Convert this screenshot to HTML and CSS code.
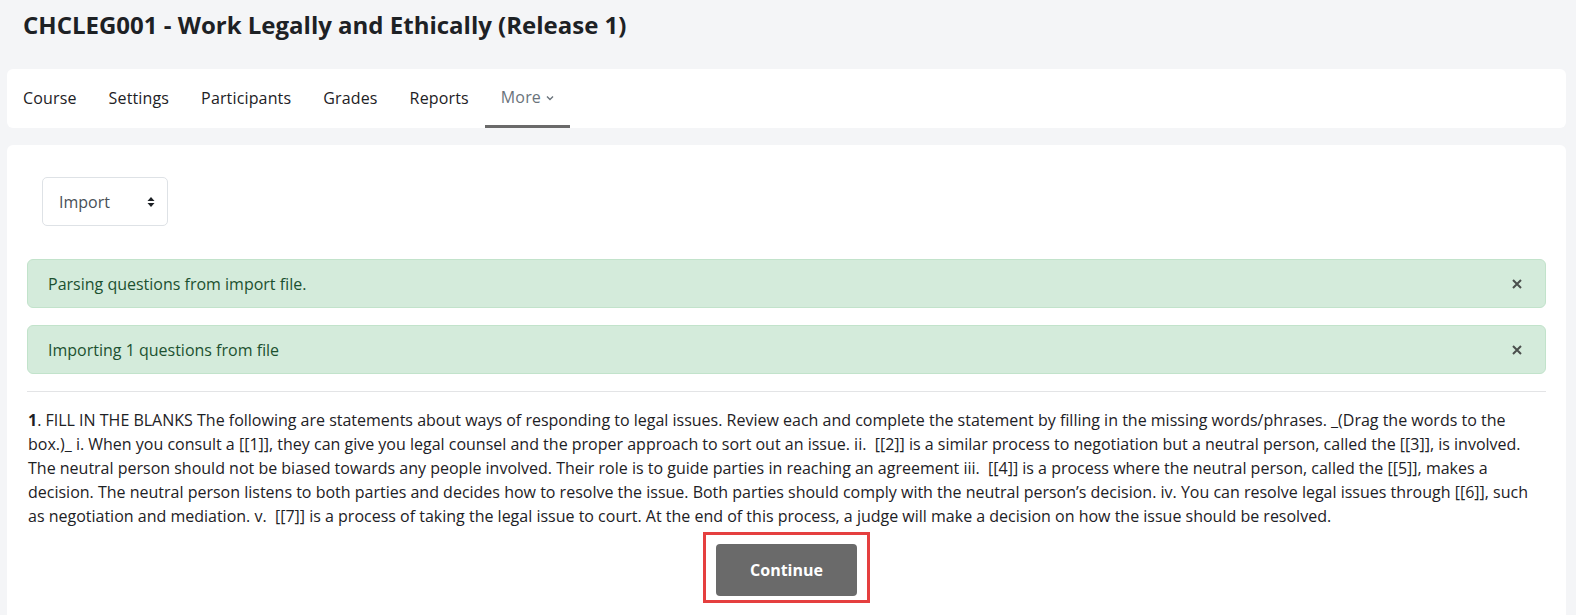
FILE: index.html
```html
<!DOCTYPE html>
<html lang="en">
<head>
    <meta charset="UTF-8">
    <meta name="viewport" content="width=device-width, initial-scale=1.0">
    <title>Import questions</title>
    <link rel="stylesheet" href="styles.css">
</head>
<body>

    <div class="page">
        <h1 class="page-title">CHCLEG001 - Work Legally and Ethically (Release 1)</h1>

        <nav class="secondary-nav">
            <a class="nav-link" href="#">Course</a>
            <a class="nav-link" href="#">Settings</a>
            <a class="nav-link" href="#">Participants</a>
            <a class="nav-link" href="#">Grades</a>
            <a class="nav-link" href="#">Reports</a>
            <a class="nav-link active" href="#">More
                <svg class="caret" width="8" height="6" viewBox="0 0 8 6"><path d="M1 1.5 L4 4.5 L7 1.5" fill="none" stroke="currentColor" stroke-width="1.4"/></svg>
            </a>
        </nav>

        <div class="main-card">
            <div class="select-box">
                <span>Import</span>
                <svg width="8" height="12" viewBox="0 0 8 12"><path d="M4 1 L7.5 5 H0.5 Z M4 11 L7.5 7 H0.5 Z" fill="#1d2125"/></svg>
            </div>

            <div class="alert">
                <span>Parsing questions from import file.</span>
                <button class="close-btn" aria-label="Dismiss">
                    <svg width="10" height="10" viewBox="0 0 10 10"><path d="M1 1 L9 9 M9 1 L1 9" stroke="currentColor" stroke-width="2"/></svg>
                </button>
            </div>

            <div class="alert">
                <span>Importing 1 questions from file</span>
                <button class="close-btn" aria-label="Dismiss">
                    <svg width="10" height="10" viewBox="0 0 10 10"><path d="M1 1 L9 9 M9 1 L1 9" stroke="currentColor" stroke-width="2"/></svg>
                </button>
            </div>

            <hr class="divider">

            <p class="question-text"><strong>1</strong>. FILL IN THE BLANKS The following are statements about ways of responding to legal issues. Review each and complete the statement by filling in the missing words/phrases. _(Drag the words to the box.)_ i. When you consult a [[1]], they can give you legal counsel and the proper approach to sort out an issue. ii.&nbsp; [[2]] is a similar process to negotiation but a neutral person, called the [[3]], is involved. The neutral person should not be biased towards any people involved. Their role is to guide parties in reaching an agreement iii.&nbsp; [[4]] is a process where the neutral person, called the [[5]], makes a decision. The neutral person listens to both parties and decides how to resolve the issue. Both parties should comply with the neutral person’s decision. iv. You can resolve legal issues through [[6]], such as negotiation and mediation. v.&nbsp; [[7]] is a process of taking the legal issue to court. At the end of this process, a judge will make a decision on how the issue should be resolved.</p>

            <div class="actions">
                <div class="highlight">
                    <button class="btn-continue">Continue</button>
                </div>
            </div>
        </div>
    </div>

</body>
</html>
```

FILE: styles.css
```css
* {
    margin: 0;
    padding: 0;
    box-sizing: border-box;
}
body {
    background-color: #f4f5f7;
    font-family: "Open Sans", Arial, sans-serif;
    font-size: 16px;
    line-height: 24px;
    color: #1d2125;
}
.page {
    padding: 0 10px 0 7px;
}
.page-title {
    font-size: 24px;
    line-height: 28px;
    font-weight: 700;
    padding: 11px 0 30px 16px;
}
.secondary-nav {
    display: flex;
    background-color: #fff;
    border-radius: 6px;
    height: 59px;
}
.nav-link {
    display: flex;
    align-items: center;
    gap: 5px;
    padding: 2px 16px 0;
    color: #1d2125;
    text-decoration: none;
    letter-spacing: 0.15px;
    border-bottom: 3px solid transparent;
}
.nav-link.active {
    color: #6a737b;
    border-bottom-color: #6a6a6a;
    padding-top: 0;
}
.caret {
    margin-top: 2px;
}
.main-card {
    background-color: #fff;
    border-radius: 6px 6px 0 0;
    margin-top: 17px;
    padding: 32px 20px 12px;
}
.select-box {
    display: flex;
    align-items: center;
    justify-content: space-between;
    width: 126px;
    height: 49px;
    margin-left: 15px;
    margin-bottom: 33px;
    padding: 0 12px 0 16px;
    border: 1px solid #dee2e6;
    border-radius: 5px;
    color: #495057;
}
.alert {
    display: flex;
    align-items: center;
    justify-content: space-between;
    background-color: #d4ebdb;
    border: 1px solid #c2e3cb;
    border-radius: 6px;
    color: #1c5130;
    padding: 12px 20px 11px;
    margin-bottom: 17px;
}
.close-btn {
    background: transparent;
    border: none;
    color: #4a4f4c;
    display: flex;
    margin-right: 3px;
    cursor: pointer;
}
.divider {
    border: none;
    border-top: 1px solid #e3e4e6;
    margin-bottom: 16px;
}
.question-text {
    padding-left: 1px;
}
.actions {
    display: flex;
    justify-content: center;
    margin-top: 4px;
}
.highlight {
    border: 3px solid #e53f3f;
    padding: 9px 10px 4px;
}
.btn-continue {
    background-color: #6a6a6a;
    color: #fff;
    border: none;
    border-radius: 4px;
    font-family: "Open Sans", Arial, sans-serif;
    font-size: 16px;
    font-weight: 700;
    line-height: 24px;
    width: 141px;
    height: 52px;
    cursor: pointer;
}
```
